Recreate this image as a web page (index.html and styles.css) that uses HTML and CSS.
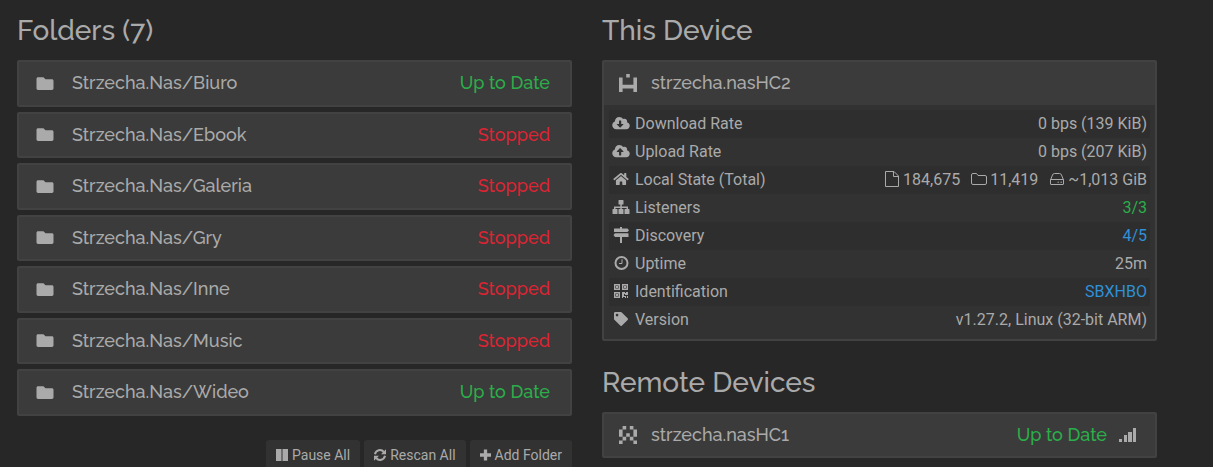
FILE: index.html
```html
<!DOCTYPE html>
<html lang="en">
<head>
<meta charset="UTF-8">
<meta name="viewport" content="width=device-width, initial-scale=1">
<title>Syncthing</title>
<link rel="stylesheet" href="styles.css">
</head>
<body>
  <svg class="sprite" aria-hidden="true">
    <symbol id="folder" viewBox="0 0 512 512"><path d="M464 128H272l-64-64H48C21 64 0 85 0 112v288c0 27 21 48 48 48h416c27 0 48-21 48-48V176c0-27-21-48-48-48z"/></symbol>
  </svg>

  <main class="container">
    <section class="column">
      <h3>Folders (7)</h3>
      <div class="panel-group">
        <div class="panel"><button class="panel-heading" type="button"><svg class="panel-icon"><use href="#folder"/></svg><span class="panel-title">Strzecha.Nas/Biuro</span><span class="panel-status text-success">Up to Date</span></button></div>
        <div class="panel"><button class="panel-heading" type="button"><svg class="panel-icon"><use href="#folder"/></svg><span class="panel-title">Strzecha.Nas/Ebook</span><span class="panel-status text-danger">Stopped</span></button></div>
        <div class="panel"><button class="panel-heading" type="button"><svg class="panel-icon"><use href="#folder"/></svg><span class="panel-title">Strzecha.Nas/Galeria</span><span class="panel-status text-danger">Stopped</span></button></div>
        <div class="panel"><button class="panel-heading" type="button"><svg class="panel-icon"><use href="#folder"/></svg><span class="panel-title">Strzecha.Nas/Gry</span><span class="panel-status text-danger">Stopped</span></button></div>
        <div class="panel"><button class="panel-heading" type="button"><svg class="panel-icon"><use href="#folder"/></svg><span class="panel-title">Strzecha.Nas/Inne</span><span class="panel-status text-danger">Stopped</span></button></div>
        <div class="panel"><button class="panel-heading" type="button"><svg class="panel-icon"><use href="#folder"/></svg><span class="panel-title">Strzecha.Nas/Music</span><span class="panel-status text-danger">Stopped</span></button></div>
        <div class="panel"><button class="panel-heading" type="button"><svg class="panel-icon"><use href="#folder"/></svg><span class="panel-title">Strzecha.Nas/Wideo</span><span class="panel-status text-success">Up to Date</span></button></div>
      </div>
      <div class="actions">
        <button class="btn" type="button"><svg class="btn-icon" viewBox="0 0 12 12"><path d="M0 0h5.500v12H0zM6.500 0H12v12H6.500z"/></svg>Pause All</button>
        <button class="btn" type="button"><svg class="btn-icon" viewBox="0 0 12 12"><path class="arrow" d="M1 5.200A5 5 0 0 1 9.800 3M11 6.800A5 5 0 0 1 2.200 9"/><path d="M12 .3v5H7zM0 11.700v-5h5z"/></svg>Rescan All</button>
        <button class="btn" type="button"><svg class="btn-icon btn-icon-plus" viewBox="0 0 12 12"><path d="M4.200 0h3.600v4.200H12v3.600H7.800V12H4.200V7.800H0V4.200h4.200z"/></svg>Add Folder</button>
      </div>
    </section>

    <section class="column">
      <h3>This Device</h3>
      <div class="panel">
        <button class="panel-heading device" type="button">
          <svg class="identicon" viewBox="0 0 5 5"><path d="M2 0h1v1H2zM0 1h1v2h3V1h1v4H4V4H1v1H0z"/></svg>
          <span class="panel-title">strzecha.nasHC2</span>
        </button>
        <div class="panel-body">
          <table>
            <tbody>
              <tr>
                <th scope="row"><svg class="icon icon-sm" viewBox="0 0 640 512"><path d="M538 227c4-11 6-22 6-35 0-53-43-96-96-96-20 0-38 6-53 16C367 64 315 32 256 32c-88 0-160 72-160 160v8C40 220 0 273 0 336c0 80 65 144 144 144h368c71 0 128-57 128-128 0-62-44-114-102-125zM405 315L299 421c-6 6-16 6-22 0L171 315c-10-10-3-27 11-27h66V176c0-9 7-16 16-16h48c9 0 16 7 16 16v112h66c14 0 21 17 11 27z"/></svg>Download Rate</th>
                <td>0 bps (139 KiB)</td>
              </tr>
              <tr>
                <th scope="row"><svg class="icon icon-sm" viewBox="0 0 640 512"><path d="M538 227c4-11 6-22 6-35 0-53-43-96-96-96-20 0-38 6-53 16C367 64 315 32 256 32c-88 0-160 72-160 160v8C40 220 0 273 0 336c0 80 65 144 144 144h368c71 0 128-57 128-128 0-62-44-114-102-125zM394 288h-66v112c0 9-7 16-16 16h-48c-9 0-16-7-16-16V288h-66c-14 0-21-17-11-27l106-106c6-6 16-6 22 0l106 106c10 10 3 27-11 27z"/></svg>Upload Rate</th>
                <td>0 bps (207 KiB)</td>
              </tr>
              <tr>
                <th scope="row"><svg class="icon icon-sm" viewBox="-8 -8 592 528"><path d="M280 148L96 300v164a16 16 0 0 0 16 16h112a16 16 0 0 0 16-16v-96a16 16 0 0 1 16-16h64a16 16 0 0 1 16 16v96a16 16 0 0 0 16 16h112a16 16 0 0 0 16-16V300L296 148a12 12 0 0 0-16 0zM572 251l-84-68V44a12 12 0 0 0-12-12h-56a12 12 0 0 0-12 12v73l-90-74a48 48 0 0 0-61 0L4 251a12 12 0 0 0-1 17l25 31a12 12 0 0 0 17 2l235-194a12 12 0 0 1 16 0l235 194a12 12 0 0 0 17-2l25-31a12 12 0 0 0-1-17z"/></svg>Local State (Total)</th>
                <td>
                  <ul class="stats">
                    <li><svg class="stat-icon" viewBox="0 0 16 16"><path class="line" d="M1.500.5h8.500l4.500 4.500v10.500h-13zM9.500.5v5h5"/></svg>184,675</li>
                    <li><svg class="stat-icon" viewBox="0 0 16 16"><path class="line" d="M.5 4q0-1.500 1.500-1.500h3.500l1.500 2h7q1.500 0 1.500 1.500v6q0 1.500-1.500 1.500H2Q.5 13.500.5 12z"/></svg>11,419</li>
                    <li><svg class="stat-icon" viewBox="0 0 16 16"><path class="line" d="M1.500 9l2-5q.5-1.500 2-1.500h5q1.500 0 2 1.500l2 5v4q0 .5-.5.5H2q-.5 0-.5-.5zM1.500 8.500h13M8.500 11.200H10M11.500 11.200H13"/></svg>~1,013 GiB</li>
                  </ul>
                </td>
              </tr>
              <tr>
                <th scope="row"><svg class="icon" viewBox="0 0 20 16"><path d="M8 1h4q.5 0 .5.5V5q0 .5-.5.5h-1.200V7.500H17V10h1q.5 0 .5.500v4q0 .5-.5.500h-4q-.5 0-.5-.5v-4q0-.5.500-.5h1.500V8.900h-4.700V10H12q.5 0 .5.500v4q0 .5-.5.500H8q-.5 0-.5-.5v-4q0-.5.500-.5h1.300V8.900H4.500V10H6q.5 0 .5.500v4q0 .5-.5.500H2q-.5 0-.5-.5v-4q0-.5.500-.5h1V7.500h6.300v-2H8q-.5 0-.5-.5V1.500Q7.500 1 8 1z"/></svg>Listeners</th>
                <td class="text-success">3/3</td>
              </tr>
              <tr>
                <th scope="row"><svg class="icon" viewBox="0 0 20 16"><path d="M9 0h2v1.500h5.500L18 3.200 16.500 5h-13Q3 5 3 4.500V2q0-.5.500-.5H9zM4 6.200h13q.5 0 .5.500v2.800q0 .5-.5.500h-6v6H9v-6H4L2.500 8.100z"/></svg>Discovery</th>
                <td class="text-info">4/5</td>
              </tr>
              <tr>
                <th scope="row"><svg class="icon" viewBox="0 0 20 16"><circle class="thick" cx="10.500" cy="8" r="6"/><path class="line" d="M11 4.200v4.300H8"/></svg>Uptime</th>
                <td>25m</td>
              </tr>
              <tr>
                <th scope="row"><svg class="icon" viewBox="0 0 20 16"><path class="qr" d="M3.700 1.700h4.600v4.600H3.700zM11.700 1.700h4.600v4.600h-4.600zM3.700 9.700h4.600v4.600H3.700z"/><path d="M5 3h2v2H5zM13 3h2v2h-2zM5 11h2v2H5zM11 9h3v1h1V9h2v3h-3v-1h-1v2h1v1h-2v1h-1zM14 13h1v2h-1zM16 13h1v2h-1z"/></svg>Identification</th>
                <td><a class="text-info" href="#">SBXHBO</a></td>
              </tr>
              <tr>
                <th scope="row"><svg class="icon icon-sm" viewBox="0 0 512 512"><path d="M0 252V48C0 21 21 0 48 0h204a48 48 0 0 1 34 14l212 212c19 19 19 49 0 68L294 498c-19 19-49 19-68 0L14 286A48 48 0 0 1 0 252zM112 64c-27 0-48 21-48 48s21 48 48 48 48-21 48-48-21-48-48-48z"/></svg>Version</th>
                <td>v1.27.2, Linux (32-bit ARM)</td>
              </tr>
            </tbody>
          </table>
        </div>
      </div>

      <h3 class="remote">Remote Devices</h3>
      <div class="panel">
        <button class="panel-heading device" type="button">
          <svg class="identicon" viewBox="0 0 5 5"><path d="M1 0h1v1H1zM3 0h1v1H3zM0 1h1v2H0zM4 1h1v2H4zM2 2h1v1H2zM1 3h1v1H1zM3 3h1v1H3zM0 4h1v1H0zM4 4h1v1H4z"/></svg>
          <span class="panel-title">strzecha.nasHC1</span>
          <span class="panel-status text-success">Up to Date</span>
          <svg class="signal" viewBox="0 0 18 14"><path d="M0 11h3v3H0zM5 7h3v7H5zM9 4h4v10H9zM14 0h3v14h-3z"/></svg>
        </button>
      </div>
    </section>
  </main>
</body>
</html>
```
FILE: styles.css
```css
:root {
  --bg: #272727;
  --panel: #323232;
  --stripe: #2e2e2e;
  --heading: #3b3b3b;
  --border: #424242;
  --text: #aaa;
  --title-font: Raleway, Lato, sans-serif;
}
* {
  box-sizing: border-box;
}
body {
  margin: 0;
  background: var(--bg);
  color: var(--text);
  font: 16px/24px Roboto, sans-serif;
}
svg {
  fill: currentColor;
  flex: none;
}
button {
  font: inherit;
  color: inherit;
  border: 0;
  cursor: pointer;
}
.sprite {
  display: none;
}

.container {
  display: grid;
  grid-template-columns: 1fr 1fr;
  gap: 30px;
  padding: 16px 56px 16px 17px;
}
h3 {
  margin: 0 0 14px;
  font: 500 28px/30px var(--title-font);
}
.remote {
  margin-top: 27px;
}

/* panels */
.panel-group {
  display: grid;
  gap: 5px;
}
.panel {
  border: 2px solid var(--border);
  border-radius: 2px;
  background: var(--panel);
}
.panel-heading {
  display: flex;
  align-items: center;
  gap: 16px;
  width: 100%;
  padding: 10px 20px 10px 15px;
  background: var(--heading);
  font: 500 18px/1.25 var(--title-font);
  text-align: left;
}
.device {
  gap: 14px;
  padding-right: 18px;
}
.panel-icon {
  width: 22px;
  height: 17px;
}
.identicon {
  width: 18px;
  height: 18px;
}
.panel-title {
  flex: 1;
}
.signal {
  width: 18px;
  height: 14px;
}
.device .signal {
  margin-left: -2px;
}
.panel-body {
  padding: 5px;
}

/* device details */
table {
  width: 100%;
  border-collapse: collapse;
}
tr:nth-child(odd) {
  background: var(--stripe);
}
th, td {
  padding: 2px 3px 2px 2px;
  font-weight: 400;
  text-align: left;
}
td {
  text-align: right;
}
.icon {
  width: 20px;
  height: 16px;
  margin-right: 4px;
  vertical-align: -2px;
}
.icon-sm {
  height: 14px;
  vertical-align: -1px;
}
.stats {
  display: flex;
  justify-content: flex-end;
  gap: 11px;
  margin: 0;
  padding: 0;
  list-style: none;
}
.stat-icon {
  width: 16px;
  height: 16px;
  margin-right: 3px;
  vertical-align: -2px;
}
.line,
.thick,
.qr,
.arrow {
  fill: none;
  stroke: currentColor;
}
.thick,
.arrow {
  stroke-width: 2;
}
.qr {
  stroke-width: 1.4;
}

/* buttons under the folder list */
.actions {
  display: flex;
  justify-content: flex-end;
  gap: 4px;
  margin-top: 24px;
}
.btn {
  padding: 5px 10px;
  border-radius: 3px;
  background: var(--panel);
  font-size: 14px;
  line-height: 20px;
}
.btn-icon {
  width: 12px;
  height: 12px;
  margin-right: 4px;
  vertical-align: -1px;
}
.btn-icon-plus {
  width: 11px;
}

.text-success {
  color: #2bae4a;
}
.text-danger {
  color: #dd2433;
}
.text-info {
  color: #3090d8;
  text-decoration: none;
}
```
